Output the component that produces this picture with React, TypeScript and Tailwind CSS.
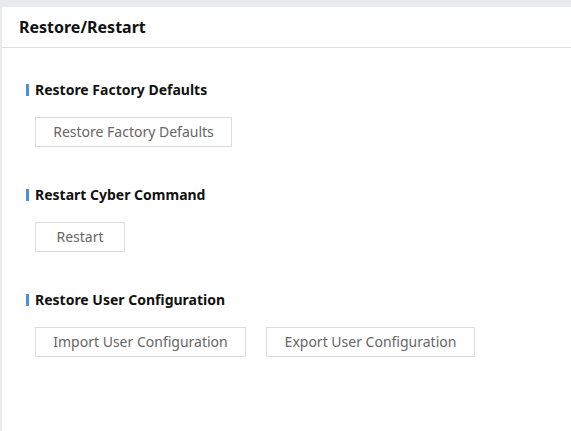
import React from "react";

const font = { fontFamily: '"Noto Sans", "Open Sans", Arial, sans-serif' };

function SectionTitle({ children }: { children: React.ReactNode }) {
  return (
    <div className="flex items-center h-[20px]">
      <span className="w-[3px] h-[12px] bg-[#4a8fe0]" />
      <span className="ml-[6px] text-[14px] font-bold text-[#111] leading-[20px]">{children}</span>
    </div>
  );
}

function Btn({ children, w }: { children: React.ReactNode; w: string }) {
  return (
    <button className={`h-[30px] ${w} border border-[#dcdcdc] bg-white text-[14px] text-[#666] leading-[28px] text-center`}>
      {children}
    </button>
  );
}

export default function App() {
  return (
    <div className="w-[571px] h-[431px] bg-[#e8ebee] pt-[7px] pl-[2px] overflow-hidden" style={font}>
      <div className="bg-white h-[424px] w-full">
        <div className="h-[41px] border-b border-[#dedede] flex items-center pl-[17px]">
          <span className="text-[16px] font-bold text-[#111]">Restore/Restart</span>
        </div>
        <div className="pl-[24px] pt-[32px]">
          <SectionTitle>Restore Factory Defaults</SectionTitle>
          <div className="mt-[17px] pl-[9px]">
            <Btn w="w-[197px]">Restore Factory Defaults</Btn>
          </div>
          <div className="mt-[38px]">
            <SectionTitle>Restart Cyber Command</SectionTitle>
          </div>
          <div className="mt-[17px] pl-[9px]">
            <Btn w="w-[90px]">Restart</Btn>
          </div>
          <div className="mt-[38px]">
            <SectionTitle>Restore User Configuration</SectionTitle>
          </div>
          <div className="mt-[17px] pl-[9px] flex gap-[20px]">
            <Btn w="w-[211px]">Import User Configuration</Btn>
            <Btn w="w-[209px]">Export User Configuration</Btn>
          </div>
        </div>
      </div>
    </div>
  );
}
